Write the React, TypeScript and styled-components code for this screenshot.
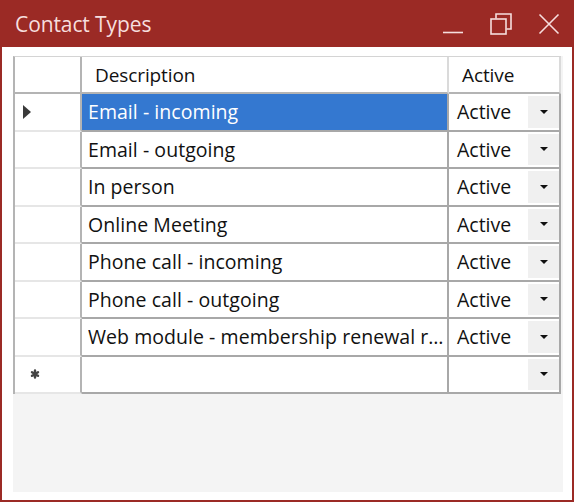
import React from 'react'
import styled, { createGlobalStyle } from 'styled-components'

// ---- data
type ContactType = { description: string; status: string }

const rows: ContactType[] = [
  { description: 'Email - incoming', status: 'Active' },
  { description: 'Email - outgoing', status: 'Active' },
  { description: 'In person', status: 'Active' },
  { description: 'Online Meeting', status: 'Active' },
  { description: 'Phone call - incoming', status: 'Active' },
  { description: 'Phone call - outgoing', status: 'Active' },
  { description: 'Web module - membership renewal reminder', status: 'Active' },
]

// ---- styles
const GlobalStyle = createGlobalStyle`
  html, body { margin: 0; padding: 0; background: #ffffff; }
  body { font-family: "Open Sans", "Noto Sans", sans-serif; }
`

const Window = styled.div`
  width: 574px;
  height: 502px;
  box-sizing: border-box;
  border: 2px solid #9b2a25;
  border-top: none;
  display: flex;
  flex-direction: column;
  background: #ffffff;
`

const TitleBar = styled.div`
  height: 47px;
  margin: 0 -2px;
  background: #9b2a25;
  display: flex;
  align-items: center;
  padding: 0 14px 0 15px;
  color: #f6dede;
`

const Title = styled.div`
  flex: 1;
  font-size: 21px;
  font-weight: 400;
  letter-spacing: -0.1px;
  margin-top: 1px;
`

const Caption = styled.div`
  display: flex;
  gap: 26px;
  align-items: center;
`

const CaptionIcon = styled.svg`
  width: 22px;
  height: 22px;
  display: block;
  stroke: #f6dede;
  fill: none;
  stroke-width: 1.6;
`

const Body = styled.div`
  flex: 1;
  padding: 9px 9px 8px 11px;
  display: flex;
`

const GridView = styled.div`
  flex: 1;
  background: #f4f4f4;
  display: flex;
  flex-direction: column;
  align-items: flex-start;
`

const Rows = styled.div`
  border-top: 1px solid #d4d4d4;
  border-left: 2px solid #b4b4b4;
`

const Row = styled.div<{ $header?: boolean }>`
  display: grid;
  grid-template-columns: 67px 367px 112px;
  height: ${(p) => (p.$header ? '37px' : '37.5px')};
`

const RowHeader = styled.div<{ $corner?: boolean }>`
  background: #ffffff;
  border-right: 2px solid #b4b4b4;
  border-bottom: ${(p) => (p.$corner ? '2px solid #b4b4b4' : '2px solid #e6e6e6')};
  display: flex;
  align-items: center;
  padding-left: 8px;
`

const HeaderCell = styled.div`
  background: #ffffff;
  border-right: 2px solid #dadada;
  border-bottom: 2px solid #b4b4b4;
  display: flex;
  align-items: center;
  padding-left: 13px;
  font-size: 19px;
  letter-spacing: -0.1px;
  color: #111111;
  white-space: nowrap;
`

const Cell = styled.div<{ $selected?: boolean }>`
  background: ${(p) => (p.$selected ? '#3478d0' : '#ffffff')};
  color: ${(p) => (p.$selected ? '#ffffff' : '#111111')};
  border-right: 2px solid #a8a8a8;
  border-bottom: 2px solid #a8a8a8;
  display: flex;
  align-items: center;
  padding-left: 6px;
  font-size: 19.5px;
  letter-spacing: 0.05px;
  white-space: nowrap;
  overflow: hidden;
  min-width: 0;
`

const Ellipsis = styled.span`
  overflow: hidden;
  text-overflow: ellipsis;
  padding-right: 2px;
`

const ComboCell = styled.div`
  background: #ffffff;
  border-right: 2px solid #a8a8a8;
  border-bottom: 2px solid #a8a8a8;
  display: flex;
  align-items: stretch;
  font-size: 19.5px;
  color: #111111;
`

const ComboValue = styled.div`
  flex: 1;
  display: flex;
  align-items: center;
  padding-left: 8px;
`

const ComboButton = styled.div`
  width: 31px;
  margin: 2px 0;
  background: #f0f0f0;
  display: flex;
  align-items: center;
  justify-content: center;
`

const DropArrow = styled.span`
  width: 0;
  height: 0;
  border-left: 4.5px solid transparent;
  border-right: 4.5px solid transparent;
  border-top: 4px solid #111111;
`

const CurrentArrow = styled.span`
  width: 0;
  height: 0;
  border-top: 7px solid transparent;
  border-bottom: 7px solid transparent;
  border-left: 8px solid #3a3a3a;
`

// ---- icons
const MinimizeIcon = () => (
  <CaptionIcon viewBox="0 0 22 22">
    <path d="M1 19.5H21" />
  </CaptionIcon>
)

const RestoreIcon = () => (
  <CaptionIcon viewBox="0 0 22 22">
    <path d="M6 5.5V1H21V16H16.5" />
    <rect x="1" y="6" width="15" height="15" />
  </CaptionIcon>
)

const CloseIcon = () => (
  <CaptionIcon viewBox="0 0 22 22">
    <path d="M1.5 1.5L20.5 20.5M20.5 1.5L1.5 20.5" />
  </CaptionIcon>
)

const NewRowIcon = () => (
  <svg width="10" height="10" viewBox="0 0 10 10" style={{ marginLeft: 7 }}>
    <g stroke="#444" strokeWidth="2.4" strokeLinecap="round">
      <path d="M5 1.5V8.5M2 3.2L8 6.8M8 3.2L2 6.8" />
    </g>
  </svg>
)

// ---- page
const App: React.FC = () => (
  <>
    <GlobalStyle />
    <Window>
      <TitleBar>
        <Title>Contact Types</Title>
        <Caption>
          <MinimizeIcon />
          <RestoreIcon />
          <CloseIcon />
        </Caption>
      </TitleBar>
      <Body>
        <GridView>
          <Rows>
            <Row $header>
              <RowHeader $corner />
              <HeaderCell>Description</HeaderCell>
              <HeaderCell>Active</HeaderCell>
            </Row>
            {rows.map((r, i) => (
              <Row key={r.description}>
                <RowHeader>{i === 0 && <CurrentArrow />}</RowHeader>
                <Cell $selected={i === 0}>
                  <Ellipsis>{r.description}</Ellipsis>
                </Cell>
                <ComboCell>
                  <ComboValue>{r.status}</ComboValue>
                  <ComboButton>
                    <DropArrow />
                  </ComboButton>
                </ComboCell>
              </Row>
            ))}
            <Row>
              <RowHeader>
                <NewRowIcon />
              </RowHeader>
              <Cell />
              <ComboCell>
                <ComboValue />
                <ComboButton>
                  <DropArrow />
                </ComboButton>
              </ComboCell>
            </Row>
          </Rows>
        </GridView>
      </Body>
    </Window>
  </>
)

export default App
